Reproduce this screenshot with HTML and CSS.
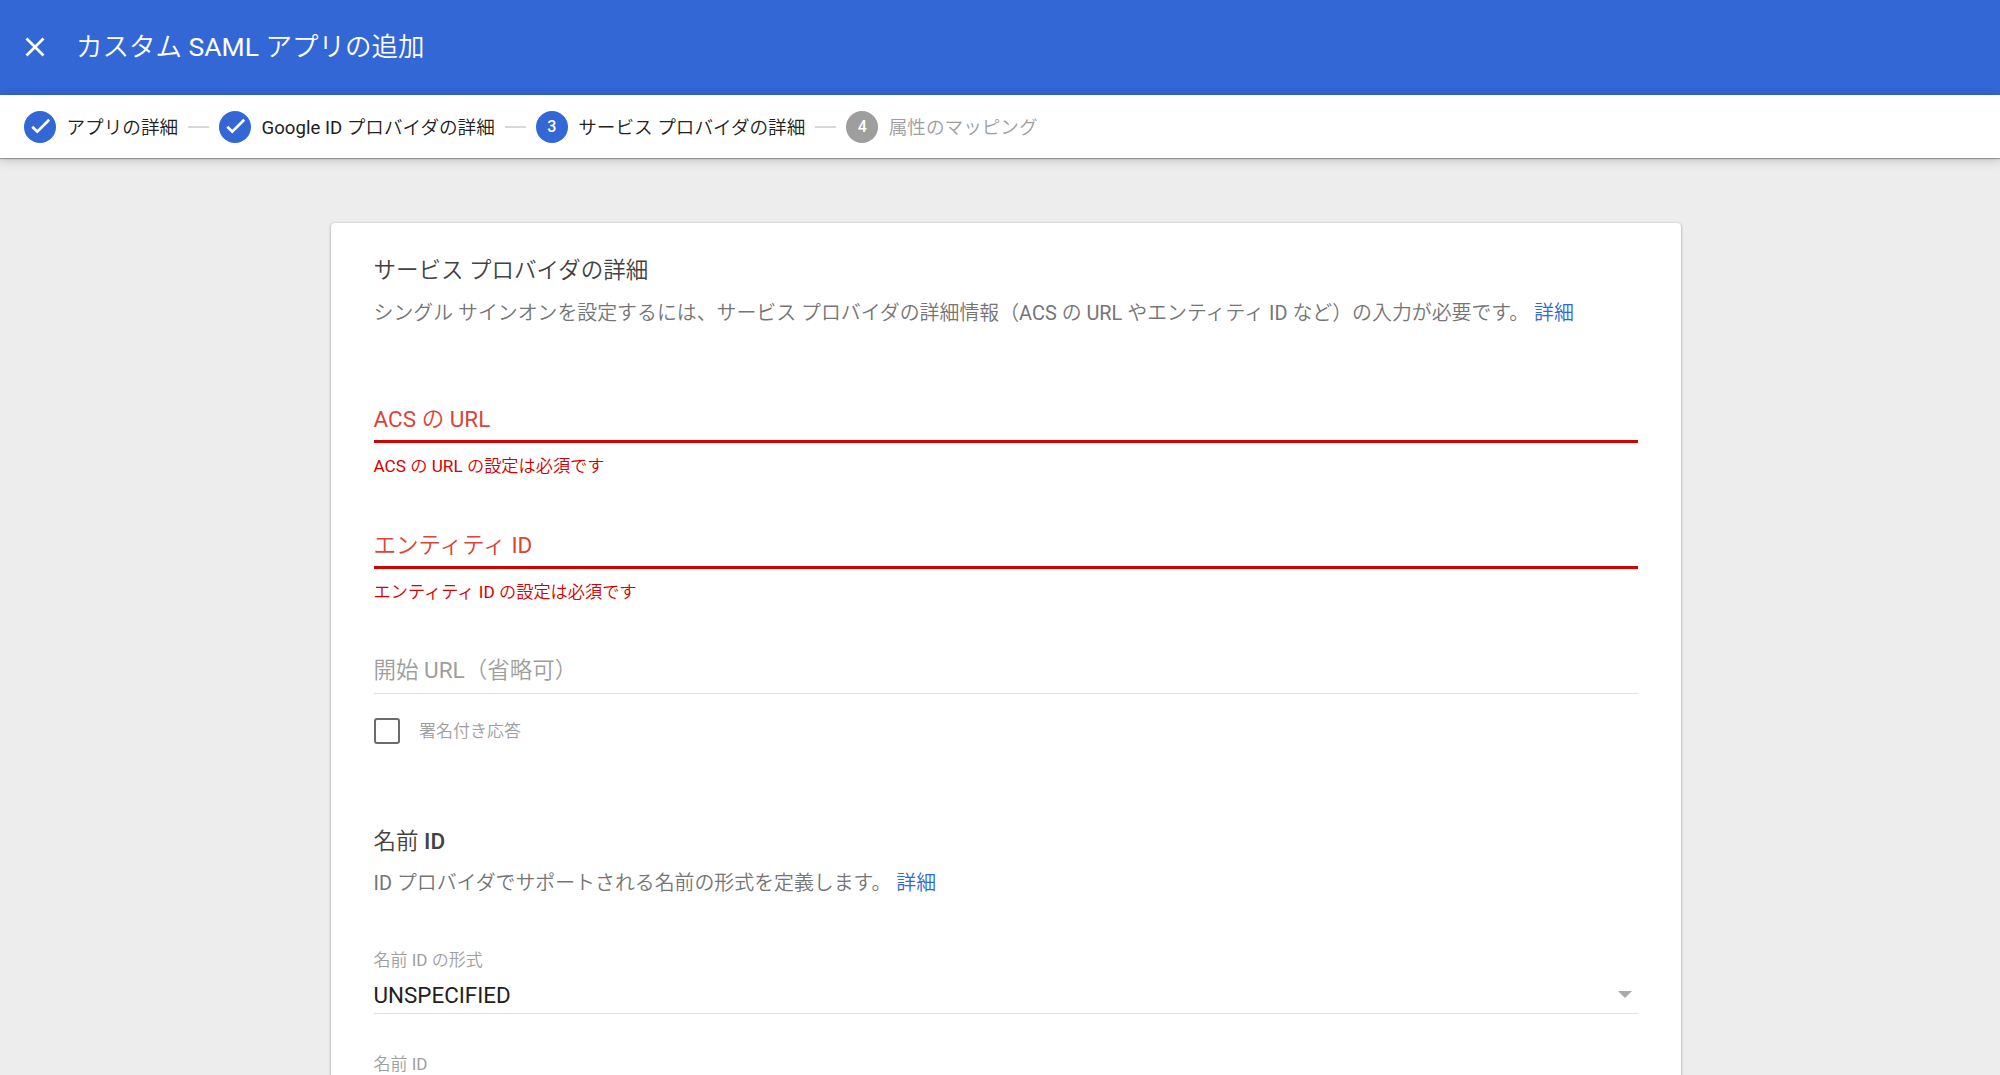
FILE: index.html
```html
<!DOCTYPE html>
<html lang="ja">
<head>
  <meta charset="UTF-8">
  <title>カスタム SAML アプリの追加</title>
  <link rel="stylesheet" href="styles.css">
</head>
<body>

<header>
  <button class="close-btn" aria-label="閉じる">
    <svg viewBox="0 0 20 20"><path d="M1.5 1.5l17 17M18.5 1.5l-17 17"/></svg>
  </button>
  <h1>カスタム SAML アプリの追加</h1>
</header>

<nav class="steps">
  <div class="step step-1">
    <span class="circle"><svg viewBox="0 0 32 32"><path d="M8.3 15.7l5 4.9L25.2 8.8"/></svg></span>
    <span class="step-name">アプリの詳細</span>
  </div>
  <span class="dash"></span>
  <div class="step step-2">
    <span class="circle"><svg viewBox="0 0 32 32"><path d="M8.3 15.7l5 4.9L25.2 8.8"/></svg></span>
    <span class="step-name">Google ID プロバイダの詳細</span>
  </div>
  <span class="dash"></span>
  <div class="step step-3">
    <span class="circle">3</span>
    <span class="step-name">サービス プロバイダの詳細</span>
  </div>
  <span class="dash"></span>
  <div class="step step-4 disabled">
    <span class="circle">4</span>
    <span class="step-name">属性のマッピング</span>
  </div>
</nav>

<main class="card">
  <section class="provider">
    <h2>サービス プロバイダの詳細</h2>
    <p class="desc">シングル サインオンを設定するには、サービス プロバイダの詳細情報（ACS の URL やエンティティ ID など）の入力が必要です。 <a href="#">詳細</a></p>

    <div class="field error">
      <label>ACS の URL</label>
      <div class="message">ACS の URL の設定は必須です</div>
    </div>
    <div class="field error">
      <label>エンティティ ID</label>
      <div class="message">エンティティ ID の設定は必須です</div>
    </div>
    <div class="field">
      <label>開始 URL（省略可）</label>
    </div>
    <div class="check-row">
      <span class="checkbox"></span>
      <span class="check-label">署名付き応答</span>
    </div>
  </section>

  <section class="name-id">
    <h2>名前 ID</h2>
    <p class="desc">ID プロバイダでサポートされる名前の形式を定義します。 <a href="#">詳細</a></p>

    <div class="small-label">名前 ID の形式</div>
    <div class="select">
      <span>UNSPECIFIED</span>
      <span class="arrow"></span>
    </div>
    <div class="small-label">名前 ID</div>
  </section>
</main>

</body>
</html>
```

FILE: styles.css
```css
* {
  box-sizing: border-box;
}
body {
  margin: 0;
  height: 1075px;
  overflow: hidden;
  background: #ededed;
  font-family: Roboto, "Noto Sans CJK JP DemiLight", "Noto Sans CJK JP Light", "Noto Sans CJK JP", sans-serif;
  color: #212121;
}
header {
  display: flex;
  align-items: center;
  height: 95px;
  padding: 0 0 2px 25px;
  background: #3367d6;
  color: #fff;
}
.close-btn {
  width: 20px;
  height: 20px;
  padding: 0;
  border: none;
  background: none;
}
.close-btn svg {
  display: block;
}
svg path {
  fill: none;
  stroke: #fff;
  stroke-width: 2.7;
}
h1 {
  margin: 0 0 0 31px;
  font-size: 26.5px;
  line-height: 40px;
  font-weight: 400;
}

/* Stepper */
.steps {
  position: relative;
  display: flex;
  align-items: center;
  height: 63px;
  padding-left: 24px;
  background: #fff;
  box-shadow: 0 1px 1px rgba(0,0,0,0.3), 0 2px 10px rgba(0,0,0,0.2);
}
.step {
  display: flex;
  align-items: center;
  font-size: 18.6px;
  white-space: nowrap;
}
.step-name {
  padding-bottom: 2px;
}
.circle {
  display: flex;
  align-items: center;
  justify-content: center;
  width: 32px;
  height: 32px;
  margin-right: 10.5px;
  border-radius: 50%;
  background: #3367d6;
  color: #fff;
  font-size: 16px;
  font-weight: 500;
}
.circle svg {
  width: 32px;
  height: 32px;
}
.dash {
  width: 21px;
  height: 2px;
  margin: 0 10px;
  background: #d8d8d8;
}
.disabled {
  color: #9e9e9e;
}
.disabled .circle {
  background: #9e9e9e;
}

/* Card */
.card {
  width: 1350px;
  height: 900px;
  margin: 65px 0 0 331px;
  padding: 31px 43px 0 42.5px;
  background: #fff;
  border-radius: 4px;
  box-shadow: 0 1px 3px rgba(0,0,0,0.3), 0 0 2px rgba(0,0,0,0.12);
}
h2 {
  margin: 0;
  font-size: 22.5px;
  line-height: 32px;
  font-weight: 500;
  color: #424242;
}
.desc {
  margin: 12.5px 0 0;
  font-size: 19.9px;
  line-height: 30px;
  color: #757575;
  white-space: nowrap;
}
a {
  color: #3367d6;
  font-weight: 500;
  text-decoration: none;
}
.provider .desc {
  margin-bottom: 74.5px;
}
.field label {
  display: block;
  height: 40px;
  border-bottom: 1px solid #e0e0e0;
  font-size: 22.5px;
  line-height: 32px;
  color: #9e9e9e;
}
.field.error {
  height: 125.5px;
}
.field.error label {
  height: 40px;
  border-bottom: 3px solid #d50000;
  color: #db4437;
}
.message {
  margin-top: 10px;
  font-size: 17.2px;
  line-height: 26px;
  color: #d50000;
}
.check-row {
  display: flex;
  align-items: center;
  height: 26px;
  margin-top: 24px;
  font-size: 17px;
  color: #9e9e9e;
}
.checkbox {
  width: 26px;
  height: 26px;
  margin-right: 19.5px;
  border: 2px solid #6b6b6b;
  border-radius: 3px;
}
.check-label {
  padding-bottom: 4px;
}
.name-id {
  margin-top: 80.5px;
}
.small-label {
  font-size: 17px;
  line-height: 26px;
  color: #9e9e9e;
}
.name-id .desc {
  margin-bottom: 47.5px;
}
.select {
  display: flex;
  justify-content: space-between;
  align-items: center;
  height: 41.5px;
  margin-bottom: 36.5px;
  padding-top: 5px;
  border-bottom: 1px solid #e0e0e0;
  font-size: 22.4px;
}
.arrow {
  margin: 0 6px 2px 0;
  border: 7px solid transparent;
  border-top: 7px solid #aaa;
  border-bottom: none;
}
```
